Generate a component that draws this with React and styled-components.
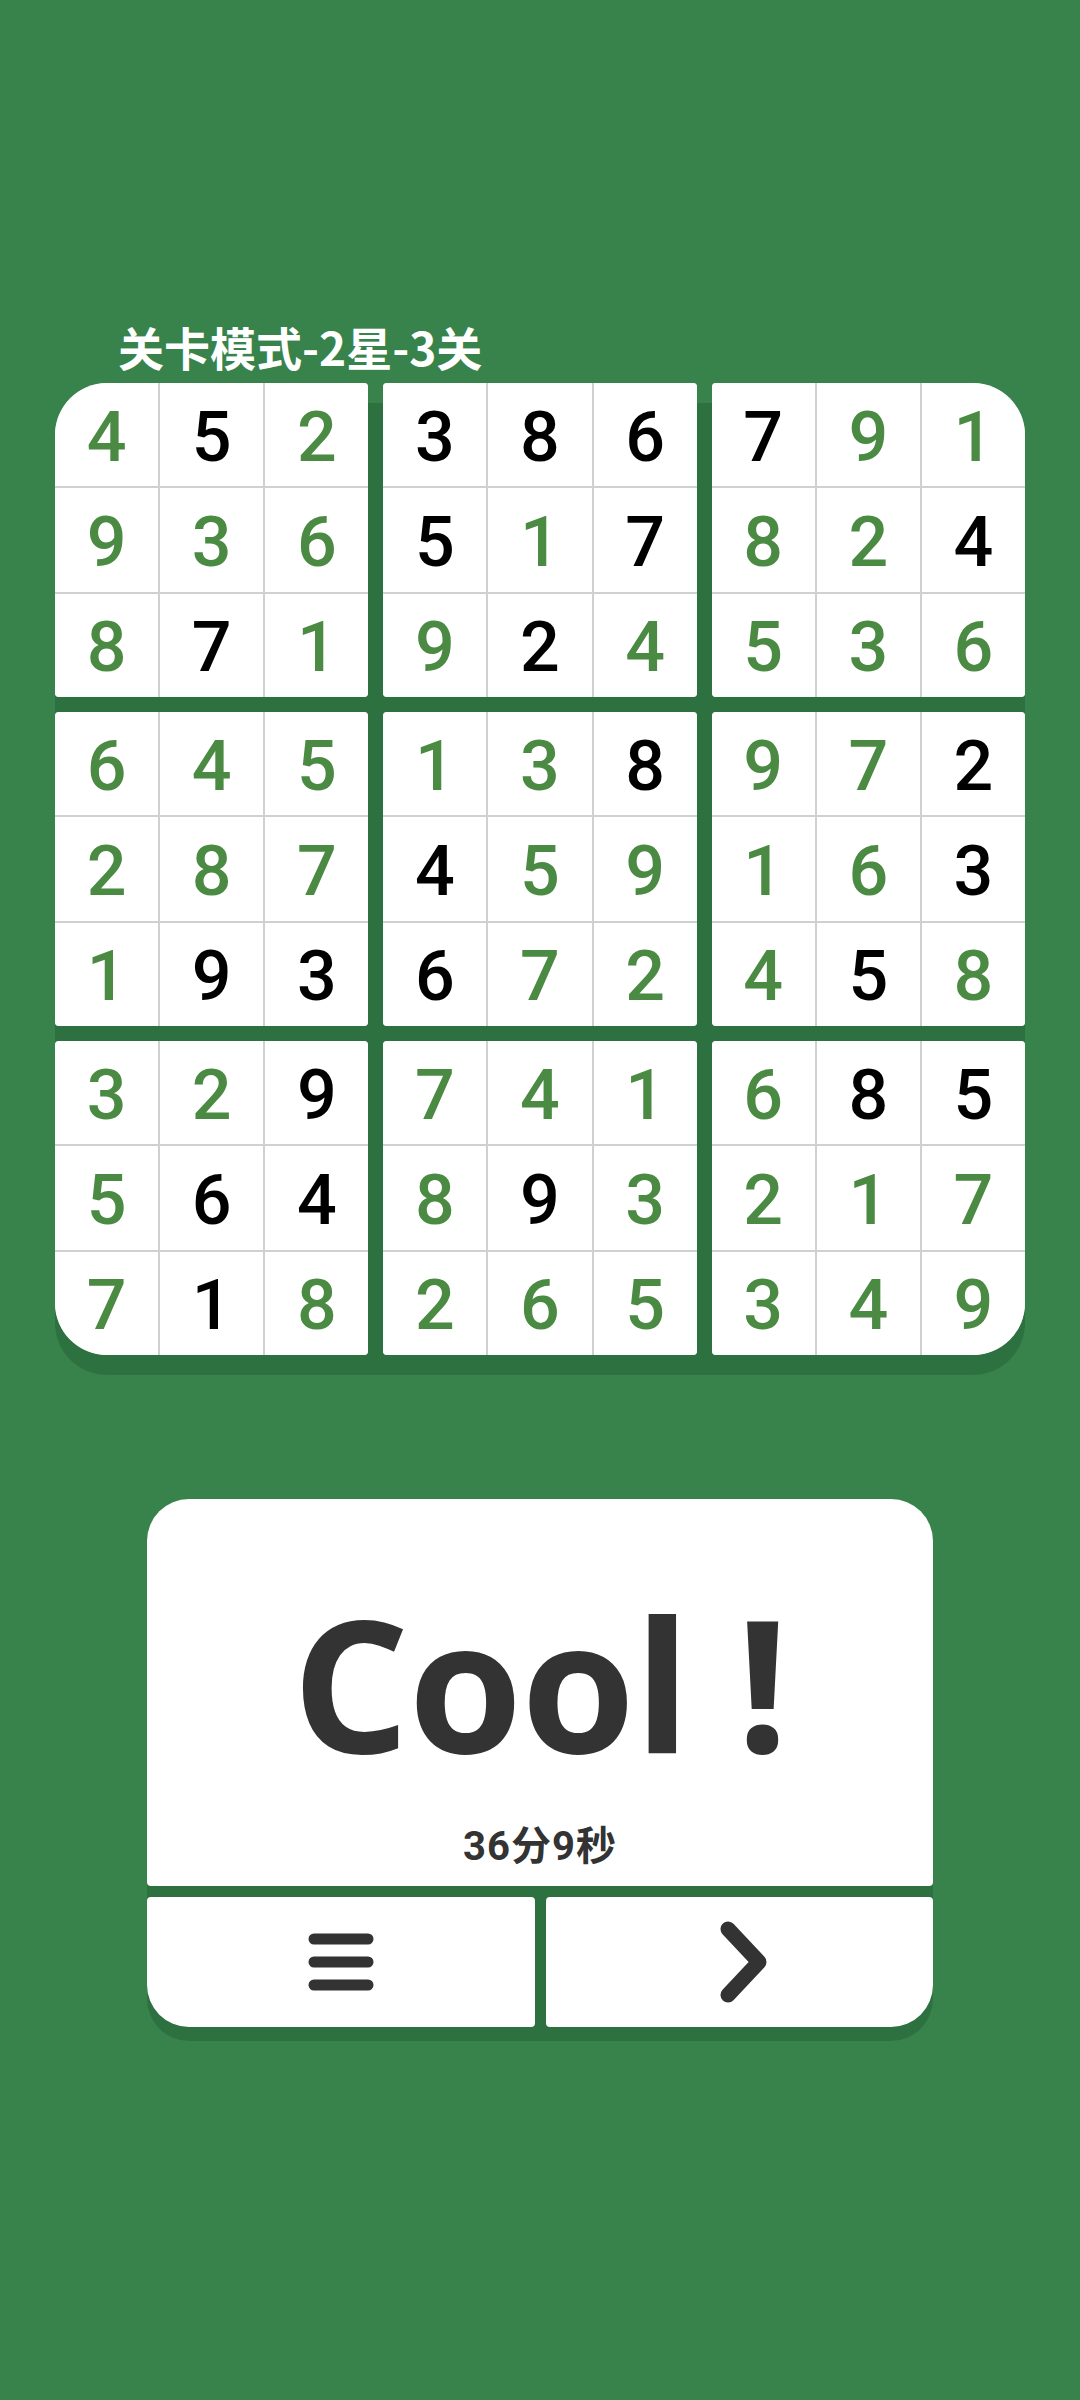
import React from "react";
import styled, { createGlobalStyle } from "styled-components";

const BG = "#37834b";
const SHADOW = "#2e7141";
const GIVEN = "#4a8a42";

const GlobalStyle = createGlobalStyle`
  html, body { margin: 0; padding: 0; background: ${BG}; }
  body { width: 1080px; min-height: 2400px; font-family: Roboto, "Noto Sans CJK SC", sans-serif; }
`;

const Page = styled.div`
  width: 1080px;
  height: 2400px;
  display: flex;
  flex-direction: column;
  padding: 318px 55px 0;
  box-sizing: border-box;
`;

const Title = styled.h1`
  margin: 0 0 9px 63px;
  font-family: "Noto Sans CJK SC", sans-serif;
  font-weight: 700;
  font-size: 46px;
  line-height: 56px;
  color: #ffffff;
  letter-spacing: 0;
`;

const Board = styled.div`
  position: relative;
  isolation: isolate;
  display: grid;
  grid-template-columns: repeat(3, 1fr);
  grid-template-rows: repeat(3, 314px);
  gap: 15px;
  width: 970px;
  &::before {
    content: "";
    position: absolute;
    left: 0;
    right: 0;
    top: 20px;
    bottom: -20px;
    background: ${SHADOW};
    border-radius: 52px;
    z-index: -1;
  }
`;

const Block = styled.div`
  display: grid;
  grid-template-columns: repeat(3, 1fr);
  grid-template-rows: repeat(3, 1fr);
  gap: 2px;
  background: #d0d0d0;
  overflow: hidden;
  border-radius: ${(p) => p.$radius};
`;

const Cell = styled.div`
  background: #ffffff;
  display: flex;
  align-items: center;
  justify-content: center;
  padding-top: 4px;
  box-sizing: border-box;
  font-family: Roboto, sans-serif;
  font-weight: 500;
  font-size: 70px;
  line-height: 1;
  color: ${(p) => (p.$given ? GIVEN : "#000000")};
`;

const Card = styled.div`
  position: relative;
  isolation: isolate;
  margin: 144px 0 0 92px;
  width: 786px;
  display: flex;
  flex-direction: column;
  gap: 11px;
  &::before {
    content: "";
    position: absolute;
    left: 0;
    right: 0;
    top: 14px;
    bottom: -14px;
    background: ${SHADOW};
    border-radius: 42px;
    z-index: -1;
  }
`;

const Message = styled.div`
  height: 387px;
  background: #ffffff;
  border-radius: 42px 42px 4px 4px;
  display: flex;
  flex-direction: column;
  align-items: center;
  padding-top: 85px;
  box-sizing: border-box;
`;

const Cool = styled.div`
  font-family: "Open Sans", sans-serif;
  font-weight: 700;
  font-size: 184px;
  line-height: 196px;
  color: #333333;
  letter-spacing: -1px;
`;

const Time = styled.div`
  margin-top: 43px;
  font-family: Roboto, "Noto Sans CJK SC", sans-serif;
  font-weight: 700;
  font-size: 40px;
  line-height: 48px;
  color: #333333;
  letter-spacing: 1px;
`;

const ButtonRow = styled.div`
  display: grid;
  grid-template-columns: 1fr 1fr;
  gap: 11px;
  height: 130px;
`;

const ActionButton = styled.button`
  border: none;
  margin: 0;
  padding: 0;
  background: #ffffff;
  display: flex;
  align-items: center;
  justify-content: center;
  border-radius: ${(p) => (p.$side === "left" ? "4px 4px 4px 42px" : "4px 4px 42px 4px")};
  cursor: pointer;
`;

const puzzle = [
  "4g5b2g3b8b6b7b9g1g",
  "9g3g6g5b1g7b8g2g4b",
  "8g7b1g9g2b4g5g3g6g",
  "6g4g5g1g3g8b9g7g2b",
  "2g8g7g4b5g9g1g6g3b",
  "1g9b3b6b7g2g4g5b8g",
  "3g2g9b7g4g1g6g8b5b",
  "5g6b4b8g9b3g2g1g7g",
  "7g1b8g2g6g5g3g4g9g",
].map((row) => {
  const cells = [];
  for (let i = 0; i < row.length; i += 2) cells.push({ v: row[i], given: row[i + 1] === "g" });
  return cells;
});

const radii = {
  0: "52px 4px 4px 4px",
  2: "4px 52px 4px 4px",
  6: "4px 4px 4px 52px",
  8: "4px 4px 52px 4px",
};

function MenuIcon() {
  return (
    <svg width="76" height="66" viewBox="0 0 76 66">
      <g stroke="#333333" strokeWidth="11" strokeLinecap="round">
        <line x1="11" y1="10" x2="65" y2="10" />
        <line x1="11" y1="33" x2="65" y2="33" />
        <line x1="11" y1="56" x2="65" y2="56" />
      </g>
    </svg>
  );
}

function NextIcon() {
  return (
    <svg width="62" height="88" viewBox="0 0 62 88" style={{ marginLeft: 10 }}>
      <path
        d="M15 11 L46 44 L15 77"
        fill="none"
        stroke="#333333"
        strokeWidth="15"
        strokeLinecap="round"
        strokeLinejoin="round"
      />
    </svg>
  );
}

export default function App() {
  const blocks = [];
  for (let b = 0; b < 9; b++) {
    const br = Math.floor(b / 3) * 3;
    const bc = (b % 3) * 3;
    const cells = [];
    for (let r = 0; r < 3; r++) {
      for (let c = 0; c < 3; c++) {
        const cell = puzzle[br + r][bc + c];
        cells.push(
          <Cell key={`${r}-${c}`} $given={cell.given}>
            {cell.v}
          </Cell>
        );
      }
    }
    blocks.push(
      <Block key={b} $radius={radii[b] || "4px"}>
        {cells}
      </Block>
    );
  }

  return (
    <>
      <GlobalStyle />
      <Page>
        <Title>关卡模式-2星-3关</Title>
        <Board>{blocks}</Board>
        <Card>
          <Message>
            <Cool>Cool !</Cool>
            <Time>36分9秒</Time>
          </Message>
          <ButtonRow>
            <ActionButton $side="left" aria-label="menu">
              <MenuIcon />
            </ActionButton>
            <ActionButton $side="right" aria-label="next">
              <NextIcon />
            </ActionButton>
          </ButtonRow>
        </Card>
      </Page>
    </>
  );
}
